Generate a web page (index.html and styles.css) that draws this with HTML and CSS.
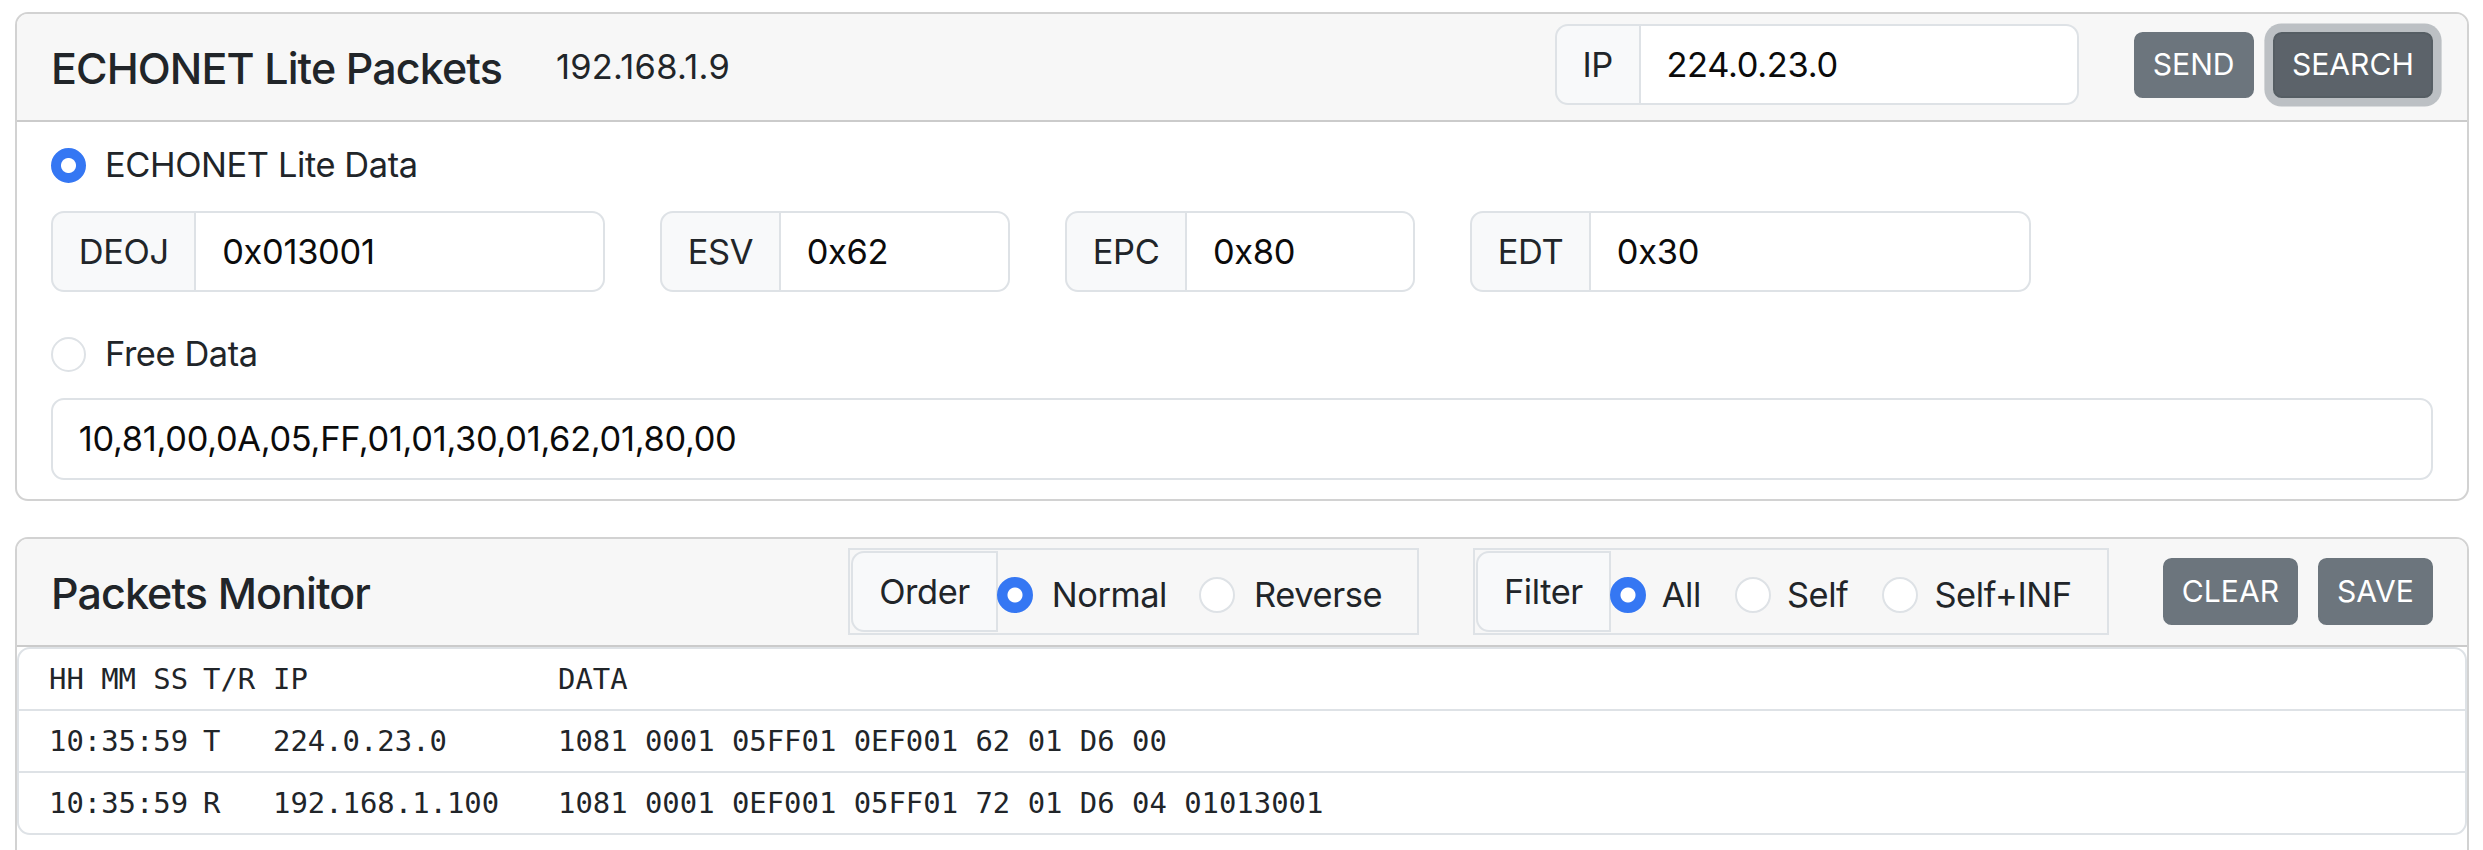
FILE: index.html
```html
<!DOCTYPE html>
<html lang="en">
<head>
<meta charset="utf-8">
<title>ECHONET Lite Packets</title>
<link rel="stylesheet" href="styles.css">
</head>
<body>
<main class="page">
  <section class="card card-send">
    <header class="card-head head-send">
      <h5 class="title">ECHONET Lite Packets</h5>
      <span class="self-ip">192.168.1.9</span>
      <div class="group group-ip">
        <span class="group-label">IP</span>
        <input class="field" type="text" value="224.0.23.0">
      </div>
      <button class="btn btn-send" type="button">SEND</button>
      <button class="btn btn-focus" type="button">SEARCH</button>
    </header>
    <div class="card-body">
      <label class="check check-el">
        <input class="radio" type="radio" name="mode" checked>
        <span>ECHONET Lite Data</span>
      </label>
      <div class="fields">
        <div class="group g-deoj"><span class="group-label">DEOJ</span><input class="field" type="text" value="0x013001"></div>
        <div class="group g-esv"><span class="group-label">ESV</span><input class="field" type="text" value="0x62"></div>
        <div class="group g-epc"><span class="group-label">EPC</span><input class="field" type="text" value="0x80"></div>
        <div class="group g-edt"><span class="group-label">EDT</span><input class="field" type="text" value="0x30"></div>
      </div>
      <label class="check check-free">
        <input class="radio" type="radio" name="mode">
        <span>Free Data</span>
      </label>
      <input class="field field-free" type="text" value="10,81,00,0A,05,FF,01,01,30,01,62,01,80,00">
    </div>
  </section>

  <section class="card card-monitor">
    <header class="card-head head-monitor">
      <h5 class="title title-monitor">Packets Monitor</h5>
      <div class="toolbar">
        <div class="seg seg-order">
          <span class="seg-label">Order</span>
          <label class="opt opt-first"><input class="radio" type="radio" name="order" checked><span>Normal</span></label>
          <label class="opt"><input class="radio" type="radio" name="order"><span>Reverse</span></label>
        </div>
        <div class="seg seg-filter">
          <span class="seg-label">Filter</span>
          <label class="opt opt-first"><input class="radio" type="radio" name="filter" checked><span>All</span></label>
          <label class="opt"><input class="radio" type="radio" name="filter"><span>Self</span></label>
          <label class="opt"><input class="radio" type="radio" name="filter"><span>Self+INF</span></label>
        </div>
        <button class="btn btn-clear" type="button">CLEAR</button>
        <button class="btn btn-save" type="button">SAVE</button>
      </div>
    </header>
    <div class="monitor-body">
      <div class="log">
        <div class="log-row"><span>HH MM SS</span><span class="c-tr">T/R</span><span>IP</span><span>DATA</span></div>
        <div class="log-row"><span>10:35:59</span><span class="c-t">T</span><span>224.0.23.0</span><span>1081 0001 05FF01 0EF001 62 01 D6 00</span></div>
        <div class="log-row"><span>10:35:59</span><span class="c-t">R</span><span>192.168.1.100</span><span>1081 0001 0EF001 05FF01 72 01 D6 04 01013001</span></div>
      </div>
    </div>
  </section>
</main>
</body>
</html>
```

FILE: styles.css
```css
html {
  overflow: hidden;
}

body {
  margin: 0;
  padding: 12px 14px 0 15px;
  background: #fff;
  color: #212529;
  font-family: Inter, "Noto Sans", "Liberation Sans", sans-serif;
  font-size: 34.4px;
  line-height: 1.5;
  letter-spacing: -0.4px;
}

.page {
  display: flex;
  flex-direction: column;
}

.card {
  border: 2px solid rgba(0, 0, 0, 0.175);
  border-radius: 13px;
  background: #fff;
  overflow: hidden;
}

.card-monitor {
  margin-top: 36px;
}

.card-head {
  display: flex;
  align-items: center;
  background: #f7f7f7;
  border-bottom: 2px solid rgba(0, 0, 0, 0.175);
}

.head-send {
  padding: 10px 34px 15px 34px;
}

.head-monitor {
  padding: 9px 34px 10px 34px;
}

.title {
  margin: 8px 0 0 0;
  font-size: 43px;
  font-weight: 500;
  line-height: 1.2;
  letter-spacing: -0.9px;
}

.title-monitor {
  margin-top: 5px;
}

.self-ip {
  margin: 5px 0 0 54px;
  letter-spacing: 0.3px;
}

.group {
  display: flex;
  align-items: stretch;
}

.group-ip {
  margin-left: auto;
  width: 524px;
}

.group-label {
  display: flex;
  align-items: center;
  padding: 12.9px 25.8px;
  background: #f8f9fa;
  border: 2px solid #dee2e6;
  border-radius: 13px 0 0 13px;
  white-space: nowrap;
}

.field {
  display: block;
  box-sizing: border-box;
  min-width: 0;
  margin: 0;
  padding: 12.9px 25.8px;
  font-family: inherit;
  font-size: 34.4px;
  line-height: 51.6px;
  letter-spacing: -0.3px;
  color: #0b0b0b;
  background: #fff;
  border: 2px solid #dee2e6;
  border-radius: 13px;
  outline: none;
}

.group .field {
  flex: 1;
  border-left: 0;
  border-radius: 0 13px 13px 0;
}

.btn {
  margin: 0;
  padding: 8.6px 17.2px;
  font-family: inherit;
  font-size: 30.1px;
  line-height: 45px;
  letter-spacing: 0;
  color: #fff;
  background: #6c757d;
  border: 2px solid #6c757d;
  border-radius: 8.6px;
}

.btn-send {
  margin-left: 55px;
}

.btn-focus {
  margin-left: 19px;
  background: #5c636a;
  border-color: #565e64;
  box-shadow: 0 0 0 8.6px rgba(130, 138, 145, 0.5);
}

.card-body {
  padding: 17px 34px 19px 34px;
}

.check {
  display: flex;
  align-items: flex-start;
  gap: 19px;
  line-height: 51.6px;
}

.check-el {
  margin-bottom: 20px;
}

.check-free {
  margin-top: 36px;
  margin-bottom: 18.5px;
}

.radio {
  appearance: none;
  -webkit-appearance: none;
  flex: none;
  box-sizing: border-box;
  width: 35px;
  height: 35px;
  margin: 0;
  background: #fff;
  border: 2px solid #dee2e6;
  border-radius: 50%;
}

.check .radio {
  margin-top: 8.3px;
}

.radio:checked {
  border-color: #3577f3;
  background: radial-gradient(circle, #fff 0 7px, #3577f3 8px);
}

.fields {
  display: flex;
  gap: 55px;
}

.g-deoj {
  width: 554px;
}

.g-esv,
.g-epc {
  width: 350px;
}

.g-edt {
  width: 561px;
}

.field-free {
  width: 100%;
}

.toolbar {
  display: flex;
  align-items: center;
  margin-left: auto;
}

.seg {
  display: flex;
  align-items: center;
  padding: 1px;
  border: 2px solid #dee2e6;
}

.seg-filter {
  margin-left: 54px;
}

.seg-label {
  display: flex;
  align-items: center;
  padding: 12.9px 25.8px;
  background: #f8f9fa;
  border: 2px solid #dee2e6;
  border-radius: 13px 0 0 13px;
  white-space: nowrap;
}

.opt {
  display: flex;
  align-items: center;
  gap: 19px;
  margin: 6px 32px 0 0;
}

.seg-filter .opt {
  gap: 16px;
  margin-right: 34px;
}

.opt .radio {
  width: 36px;
  height: 36px;
}

.opt-first {
  margin-left: -1px;
}

.seg .opt:last-child {
  margin-right: 34px;
}

.btn-clear {
  margin-left: 54px;
}

.btn-save {
  margin-left: 19.5px;
}

.monitor-body {
  padding: 0 0 34px 0;
}

.log {
  border: 2px solid #dee2e6;
  border-radius: 13px;
  font-family: "DejaVu Sans Mono", "Liberation Mono", monospace;
  font-size: 28.9px;
  letter-spacing: 0;
}

.log-row {
  display: grid;
  grid-template-columns: 154px 70px 285px 1fr;
  height: 60px;
  padding-left: 30px;
  line-height: 60px;
  white-space: pre;
  border-bottom: 2px solid #dee2e6;
}

.log-row:last-child {
  border-bottom: 0;
}
```
